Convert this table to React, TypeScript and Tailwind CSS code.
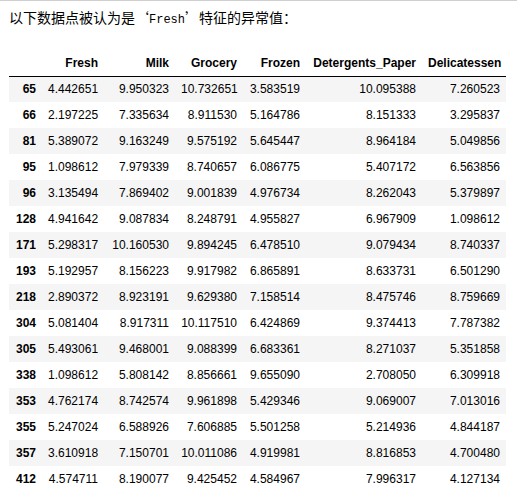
import React from "react";

const cols: [string, string][] = [
  ["Fresh", "w-[62px]"],
  ["Milk", "w-[71px]"],
  ["Grocery", "w-[68px]"],
  ["Frozen", "w-[63px]"],
  ["Detergents_Paper", "w-[116px]"],
  ["Delicatessen", "w-[84px]"],
];
const rows: [string, string[]][] = [
  ["65", ["4.442651", "9.950323", "10.732651", "3.583519", "10.095388", "7.260523"]],
  ["66", ["2.197225", "7.335634", "8.911530", "5.164786", "8.151333", "3.295837"]],
  ["81", ["5.389072", "9.163249", "9.575192", "5.645447", "8.964184", "5.049856"]],
  ["95", ["1.098612", "7.979339", "8.740657", "6.086775", "5.407172", "6.563856"]],
  ["96", ["3.135494", "7.869402", "9.001839", "4.976734", "8.262043", "5.379897"]],
  ["128", ["4.941642", "9.087834", "8.248791", "4.955827", "6.967909", "1.098612"]],
  ["171", ["5.298317", "10.160530", "9.894245", "6.478510", "9.079434", "8.740337"]],
  ["193", ["5.192957", "8.156223", "9.917982", "6.865891", "8.633731", "6.501290"]],
  ["218", ["2.890372", "8.923191", "9.629380", "7.158514", "8.475746", "8.759669"]],
  ["304", ["5.081404", "8.917311", "10.117510", "6.424869", "9.374413", "7.787382"]],
  ["305", ["5.493061", "9.468001", "9.088399", "6.683361", "8.271037", "5.351858"]],
  ["338", ["1.098612", "5.808142", "8.856661", "9.655090", "2.708050", "6.309918"]],
  ["353", ["4.762174", "8.742574", "9.961898", "5.429346", "9.069007", "7.013016"]],
  ["355", ["5.247024", "6.588926", "7.606885", "5.501258", "5.214936", "4.844187"]],
  ["357", ["3.610918", "7.150701", "10.011086", "4.919981", "8.816853", "4.700480"]],
  ["412", ["4.574711", "8.190077", "9.425452", "4.584967", "7.996317", "4.127134"]],
];

export default function App() {
  return (
    <div className="w-[517px] h-[491px] overflow-hidden bg-white border-t border-[#cfcfcf]">
      <div
        className="pl-[9px] pt-[6px] text-[14px] leading-[20px] text-black"
        style={{ fontFamily: '"Noto Sans CJK SC", sans-serif' }}
      >
        以下数据点被认为是
        <span className="inline-block w-[14px] text-right">‘</span>
        <span className="text-[12px]" style={{ fontFamily: '"Liberation Mono", "Noto Sans CJK SC", monospace' }}>
          Fresh
        </span>
        <span className="inline-block w-[14px] text-left">’</span>
        特征的异常值：
      </div>
      <table
        className="ml-[9px] mt-[20px] w-[497px] table-fixed border-collapse text-[12px] text-black"
        style={{ fontFamily: '"Liberation Sans", Arial, sans-serif' }}
      >
        <thead className="border-b border-black">
          <tr>
            <th className="w-[33px] px-[6px] h-[26px] leading-[14px]"></th>
            {cols.map(([c, w]) => (
              <th
                key={c}
                className={`${w} px-[6px] h-[26px] leading-[14px] font-bold text-right align-middle whitespace-nowrap`}
              >
                {c}
              </th>
            ))}
          </tr>
        </thead>
        <tbody>
          {rows.map(([idx, vals], i) => (
            <tr key={idx} className={i % 2 === 0 ? "bg-[#f5f5f5]" : "bg-white"}>
              <th className="px-[6px] h-[26px] leading-[14px] font-bold text-right align-middle">{idx}</th>
              {vals.map((v, j) => (
                <td key={j} className="px-[6px] h-[26px] leading-[14px] text-right align-middle whitespace-nowrap">
                  {v}
                </td>
              ))}
            </tr>
          ))}
        </tbody>
      </table>
    </div>
  );
}
